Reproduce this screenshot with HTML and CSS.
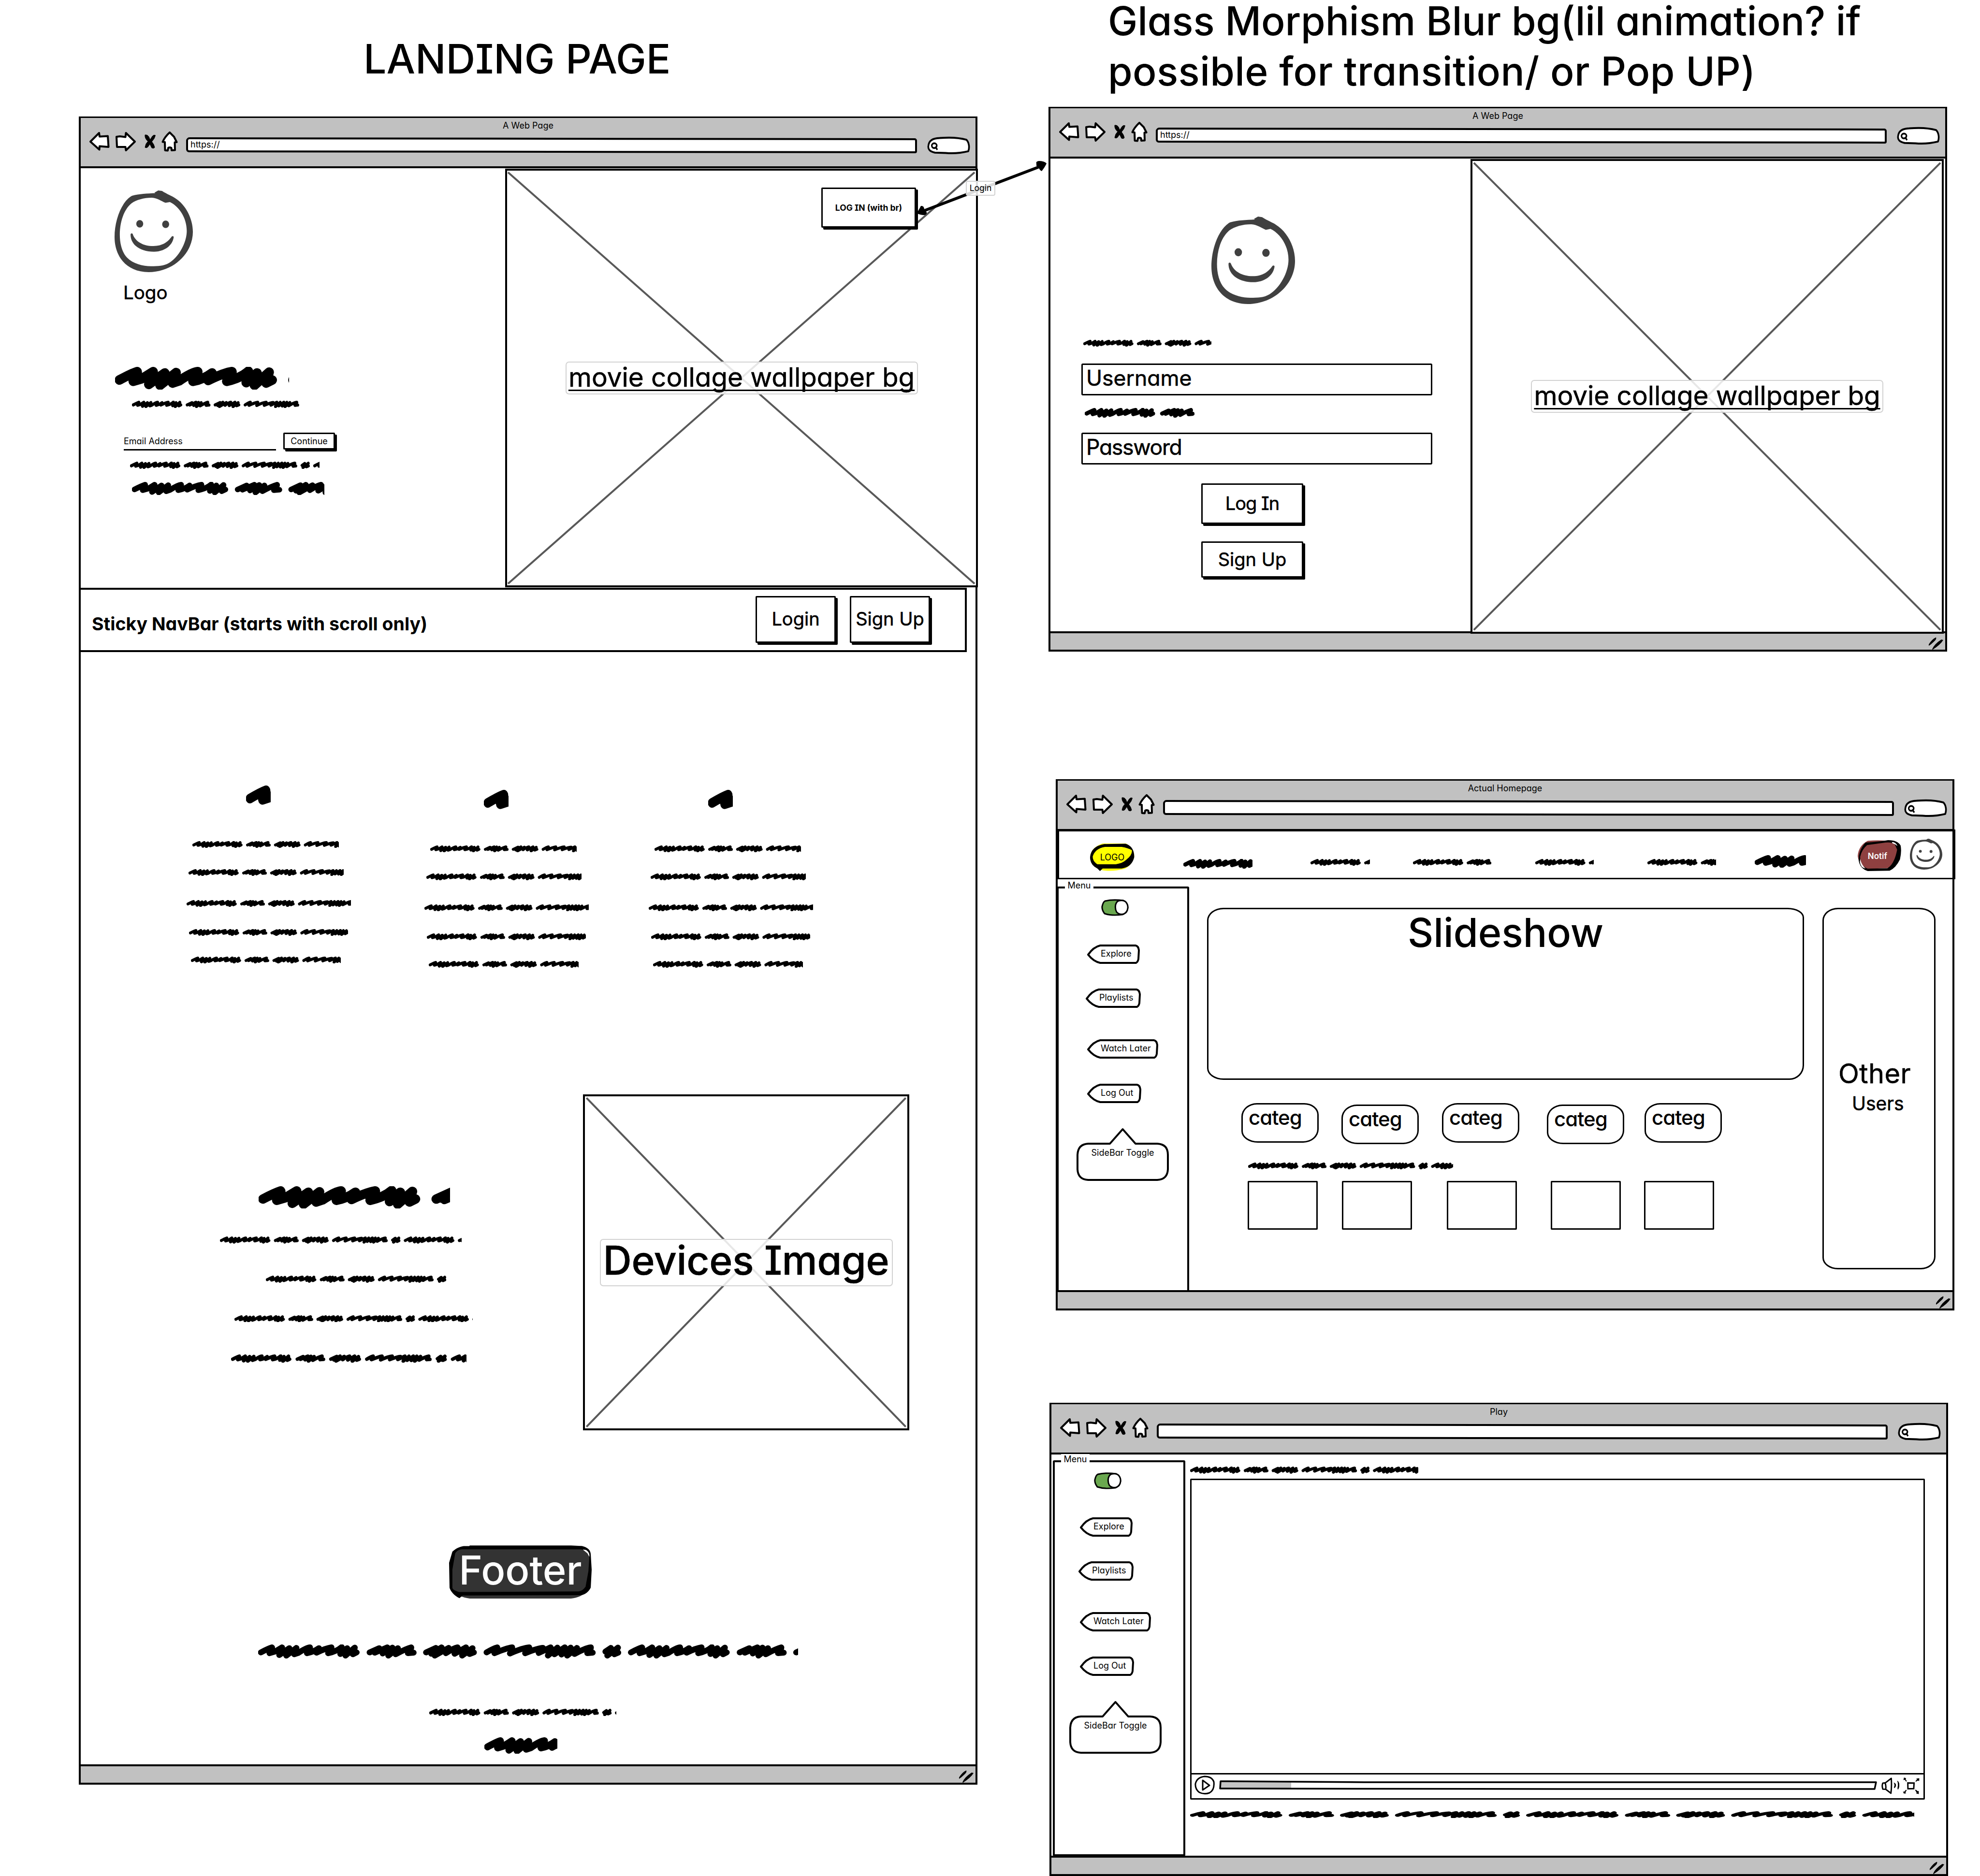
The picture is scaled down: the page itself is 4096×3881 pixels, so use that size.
FILE: index.html
```
<!DOCTYPE html>
<html lang="en">
<head>
<meta charset="utf-8">
<title>Streaming site wireframes</title>
<link rel="stylesheet" href="styles.css">
</head>
<body>
<svg class="defs" width="0" height="0" aria-hidden="true">
  <defs>
    <g id="phrase" fill="none" stroke="#000" stroke-width="22" stroke-linecap="round" stroke-linejoin="round">
      <path d="M10,30 Q36,16 51,11 Q53,18 42,33 L62,27 L88,11 L78,40 L115,14 L104,42 L141,13 L133,37 L148,32 Q178,12 191,11 Q192,18 180,33 Q205,28 224,14 L215,31 Q250,14 270,11 Q272,17 258,33 Q290,26 308,10 L303,36 L328,14 L322,42 L356,12 L349,37 L363,30"/>
      <path d="M411,30 L446,14 L430,31 L476,11 L459,34 L495,12 L480,42 L515,14 L507,37 Q545,16 564,11 Q566,17 552,33 L573,31"/>
      <path d="M619,30 L655,13 L638,35 L676,11 L651,42 L702,13 L692,33 Q720,14 735,11 L724,35 L766,11 L752,42 L790,14 L779,36 L795,30"/>
      <path d="M842,30 Q868,14 881,11 Q883,18 871,33 Q915,14 936,11 Q938,18 928,34 Q975,13 999,11 Q1000,18 984,33 Q1030,14 1050,13 L1034,32 L1078,11 L1068,42 L1103,12 L1092,37 L1130,11 L1118,38 L1152,12 L1139,42 L1175,13 L1166,36 Q1205,14 1226,11 Q1228,18 1213,33 L1233,31"/>
      <path d="M1280,27 L1300,13 L1287,42 L1326,12 L1313,37 L1327,31 L1292,27"/>
    </g>
    <g id="scribble">
      <use href="#phrase"/>
      <use href="#phrase" x="1364"/>
      <use href="#phrase" x="2728"/>
    </g>
    <symbol id="smiley" viewBox="0 0 269 304" preserveAspectRatio="none">
      <path fill="#404040" fill-rule="evenodd" d="M137,8 L150,0 L163,2 C180,14 200,22 207,28 C244,52 269,105 269,154 C269,232 205,303 117,304 C40,303 0,245 0,173 C0,110 25,40 60,20 C85,12 112,12 140,10 Z M18,165 C18,196 25,230 43,250 C62,272 98,282 125,282 C150,282 168,282 187,270 C220,248 248,195 248,150 C248,100 220,58 190,43 L175,46 C160,40 148,28 128,27 C100,27 75,35 58,48 C33,70 18,115 18,165 Z"/>
      <ellipse fill="#404040" cx="86.500" cy="124" rx="12" ry="14"/>
      <ellipse fill="#404040" cx="175.500" cy="126" rx="12" ry="14"/>
      <path fill="#404040" d="M55,164 C56,158 62,159 63,164 C72,190 98,207 133,207 C165,207 184,191 196,172 C199,168 204,170 203,175 C198,208 168,228 135,228 C92,228 55,205 55,164 Z"/>
    </symbol>
    <symbol id="nav-back" viewBox="0 0 42 42">
      <path fill="#fff" stroke="#000" stroke-width="4" stroke-linejoin="round" d="M2,21 L20,3 L21,10.500 L38,9.500 L39.500,32 L21,30.500 L20.500,37.500 Z"/>
    </symbol>
    <symbol id="nav-forward" viewBox="0 0 42 42">
      <path fill="#fff" stroke="#000" stroke-width="4" stroke-linejoin="round" d="M2,11 L9,10 L20.500,11.500 L21.500,3 L40,21 L21.500,39 L20.500,32 L3,32 Z"/>
    </symbol>
    <symbol id="nav-stop" viewBox="0 0 24 30">
      <path d="M2,1 Q7,0 10,5 L12.500,11 L17,4 Q20,0 23.500,2 Q22,9 16,15 Q21,21 22,27 Q20,30 16,28 L12,20 L8,26 Q5,29 2,27 Q3,19 8,14.500 Q1,8 2,1 Z" stroke="#000" stroke-width="1"/>
    </symbol>
    <symbol id="nav-home" viewBox="0 0 34 42">
      <path fill="#fff" stroke="#000" stroke-width="4" stroke-linejoin="round" d="M17,2 L26,11 L31.500,22 L27.500,22.500 L28,38.500 L21,39 L20.500,34 Q17,32 14,34 L13,39.500 L7.500,39 L7,22 L2.500,21.500 Q7,11 17,2 Z"/>
    </symbol>
    <symbol id="nav-search" viewBox="1320 72 139 53" preserveAspectRatio="none">
      <path fill="#fff" stroke="#000" stroke-width="5.500" stroke-linejoin="round" d="M1324,99 C1326,85 1336,78 1360,77 C1385,75 1420,75 1447,82 C1456,90 1457,105 1453,115 C1430,120 1405,122 1380,120 L1345,119 C1328,116 1322,109 1324,99 Z"/>
      <ellipse cx="1343" cy="99" rx="8" ry="7" fill="none" stroke="#000" stroke-width="5"/>
      <path d="M1346,102 L1353,111" stroke="#000" stroke-width="5"/>
    </symbol>
    <symbol id="grip" viewBox="0 0 32 26">
      <path d="M1,15 Q8,4 16,0.500 Q18,4 11,10 Q6,15 1,18 Z M8,25 Q13,14 27,5 L31,6 Q25,16 9,26 Z"/>
    </symbol>
    <symbol id="toggle" viewBox="0 0 57 35">
      <path fill="#6aa84f" stroke="#000" stroke-width="3" d="M8,4 Q24,0 46,3 Q54,9 55,18 Q53,29 44,32 Q22,35 7,30 Q1,22 2,15 Q4,6 8,4 Z"/>
      <path fill="#fff" stroke="#000" stroke-width="3" d="M36,3.500 Q46,1 51,6 Q56,12 55,19 Q54,28 46,31 Q38,33 32,27 Q28,20 30,11 Q32,5 36,3.500 Z"/>
    </symbol>
  </defs>
</svg>

<main class="board">
  <h1 class="note note-landing">LANDING PAGE</h1>
  <h2 class="note note-glass"><span>Glass Morphism Blur bg(lil animation? if</span><span>possible for transition/ or Pop UP)</span></h2>

  <section class="window window-landing">
    <header class="chrome">
      <div class="chrome-title">A Web Page</div>
      <div class="chrome-bar">
        <svg class="ic-arrow"><use href="#nav-back"/></svg>
        <svg class="ic-arrow"><use href="#nav-forward"/></svg>
        <svg class="ic-stop"><use href="#nav-stop"/></svg>
        <svg class="ic-home"><use href="#nav-home"/></svg>
        <div class="address">https://</div>
        <svg class="ic-search"><use href="#nav-search"/></svg>
      </div>
    </header>
    <div class="page">
      <div class="hero">
        <div class="hero-copy">
          <svg class="hero-logo"><use href="#smiley"/></svg>
          <div class="logo-name">Logo</div>
          <svg class="scribble hs1" width="360" height="47" viewBox="0 0 402 52" preserveAspectRatio="none"><use href="#scribble"/></svg>
          <svg class="scribble hs2" width="347" height="15" viewBox="0 0 1248 52" preserveAspectRatio="none"><use href="#scribble"/></svg>
          <div class="signup">
            <div class="email">Email Address</div>
            <div class="btn btn-small">Continue</div>
          </div>
          <svg class="scribble hs3" width="392" height="15" viewBox="0 0 1410 52" preserveAspectRatio="none"><use href="#scribble"/></svg>
          <svg class="scribble hs4" width="398" height="27" viewBox="0 0 748 52" preserveAspectRatio="none"><use href="#scribble"/></svg>
        </div>
        <div class="image image-hero">
          <svg class="cross" viewBox="0 0 100 100" preserveAspectRatio="none"><path d="M.2,.4 L99.700,99.600 M99.700,.4 L.2,99.600" vector-effect="non-scaling-stroke"/></svg>
          <div class="caption">movie collage wallpaper bg</div>
          <div class="btn btn-login-hero">LOG IN (with br)</div>
        </div>
      </div>

      <nav class="sticky">
        <div class="sticky-title">Sticky NavBar (starts with scroll only)</div>
        <div class="btn btn-nav">Login</div>
        <div class="btn btn-nav">Sign Up</div>
      </nav>

      <div class="features">
        <div class="feature">
          <svg class="scribble f0" width="51" height="47" viewBox="0 0 63 52" preserveAspectRatio="none"><use href="#scribble"/></svg>
          <svg class="scribble f1" width="303" height="14" viewBox="0 0 1092 52" preserveAspectRatio="none"><use href="#scribble"/></svg>
          <svg class="scribble f2" width="321" height="14" viewBox="0 0 1157 52" preserveAspectRatio="none"><use href="#scribble"/></svg>
          <svg class="scribble f3" width="340" height="14" viewBox="0 0 1226 52" preserveAspectRatio="none"><use href="#scribble"/></svg>
          <svg class="scribble f4" width="329" height="14" viewBox="0 0 1187 52" preserveAspectRatio="none"><use href="#scribble"/></svg>
          <svg class="scribble f5" width="310" height="14" viewBox="0 0 1118 52" preserveAspectRatio="none"><use href="#scribble"/></svg>
        </div>
        <div class="feature">
          <svg class="scribble f0" width="51" height="47" viewBox="0 0 63 52" preserveAspectRatio="none"><use href="#scribble"/></svg>
          <svg class="scribble f1" width="303" height="14" viewBox="0 0 1092 52" preserveAspectRatio="none"><use href="#scribble"/></svg>
          <svg class="scribble f2" width="321" height="14" viewBox="0 0 1157 52" preserveAspectRatio="none"><use href="#scribble"/></svg>
          <svg class="scribble f3" width="340" height="14" viewBox="0 0 1226 52" preserveAspectRatio="none"><use href="#scribble"/></svg>
          <svg class="scribble f4" width="329" height="14" viewBox="0 0 1187 52" preserveAspectRatio="none"><use href="#scribble"/></svg>
          <svg class="scribble f5" width="310" height="14" viewBox="0 0 1118 52" preserveAspectRatio="none"><use href="#scribble"/></svg>
        </div>
        <div class="feature">
          <svg class="scribble f0" width="51" height="47" viewBox="0 0 63 52" preserveAspectRatio="none"><use href="#scribble"/></svg>
          <svg class="scribble f1" width="303" height="14" viewBox="0 0 1092 52" preserveAspectRatio="none"><use href="#scribble"/></svg>
          <svg class="scribble f2" width="321" height="14" viewBox="0 0 1157 52" preserveAspectRatio="none"><use href="#scribble"/></svg>
          <svg class="scribble f3" width="340" height="14" viewBox="0 0 1226 52" preserveAspectRatio="none"><use href="#scribble"/></svg>
          <svg class="scribble f4" width="329" height="14" viewBox="0 0 1187 52" preserveAspectRatio="none"><use href="#scribble"/></svg>
          <svg class="scribble f5" width="310" height="14" viewBox="0 0 1118 52" preserveAspectRatio="none"><use href="#scribble"/></svg>
        </div>
      </div>

      <div class="devices">
        <div class="devices-copy">
          <svg class="scribble d0" width="396" height="46" viewBox="0 0 443 52" preserveAspectRatio="none"><use href="#scribble"/></svg>
          <svg class="scribble d1" width="500" height="14.500" viewBox="0 0 1792 52" preserveAspectRatio="none"><use href="#scribble"/></svg>
          <svg class="scribble d2" width="373" height="14.500" viewBox="0 0 1337 52" preserveAspectRatio="none"><use href="#scribble"/></svg>
          <svg class="scribble d3" width="493" height="14.500" viewBox="0 0 1767 52" preserveAspectRatio="none"><use href="#scribble"/></svg>
          <svg class="scribble d4" width="487" height="17" viewBox="0 0 1460 52" preserveAspectRatio="none"><use href="#scribble"/></svg>
        </div>
        <div class="image image-devices">
          <svg class="cross" viewBox="0 0 100 100" preserveAspectRatio="none"><path d="M.5,.5 L99.500,99.500 M99.500,.5 L.5,99.500" vector-effect="non-scaling-stroke"/></svg>
          <div class="caption caption-large">Devices Image</div>
        </div>
      </div>

      <div class="footer">
        <div class="badge badge-footer">
          <svg class="badge-shape" viewBox="431 98 303 311" preserveAspectRatio="none">
            <path fill="#333" d="M475,98 L690,98 L715,102 L730,240 L716,385 Q705,405 690,409 L475,409 Q455,402 448,380 L440,240 Z"/>
            <path d="M462,102 L712,102 C726,106 732,130 732,150 L734,240 L732,345 C728,370 720,386 712,389 L460,391 L453,407 C440,390 433,360 432,345 L431,200 L438,135 C445,115 455,104 462,102 Z"/>
            <path fill="#333" d="M458,121 L712,121 C722,130 729,150 729,170 L727,250 L721,340 C716,358 712,366 706,367 L452,371 C444,365 438,355 438,345 L438,240 L444,145 C447,130 452,122 458,121 Z"/>
            <path fill="#fff" d="M715,122 L722,125 C728,135 730,150 729,165 L725,145 Z"/>
          </svg>
          <span>Footer</span>
        </div>
        <svg class="scribble g1" width="1117" height="28.500" viewBox="0 0 1990 52" preserveAspectRatio="none"><use href="#scribble"/></svg>
        <svg class="scribble g2" width="386.500" height="15" viewBox="0 0 1371 52" preserveAspectRatio="none"><use href="#scribble"/></svg>
        <svg class="scribble g3" width="151" height="34.500" viewBox="0 0 232 52" preserveAspectRatio="none"><use href="#scribble"/></svg>
      </div>
    </div>
    <footer class="status"><svg class="ic-grip"><use href="#grip"/></svg></footer>
  </section>

  <section class="window window-login">
    <header class="chrome">
      <div class="chrome-title">A Web Page</div>
      <div class="chrome-bar">
        <svg class="ic-arrow"><use href="#nav-back"/></svg>
        <svg class="ic-arrow"><use href="#nav-forward"/></svg>
        <svg class="ic-stop"><use href="#nav-stop"/></svg>
        <svg class="ic-home"><use href="#nav-home"/></svg>
        <div class="address">https://</div>
        <svg class="ic-search"><use href="#nav-search"/></svg>
      </div>
    </header>
    <div class="page login">
      <div class="login-form">
        <svg class="login-logo"><use href="#smiley"/></svg>
        <svg class="scribble l1" width="265" height="14" viewBox="0 0 956 52" preserveAspectRatio="none"><use href="#scribble"/></svg>
        <div class="field field-user">Username</div>
        <svg class="scribble l2" width="227" height="20" viewBox="0 0 583 52" preserveAspectRatio="none"><use href="#scribble"/></svg>
        <div class="field field-pass">Password</div>
        <div class="btn btn-form btn-in">Log In</div>
        <div class="btn btn-form btn-up">Sign Up</div>
      </div>
      <div class="image image-login">
        <svg class="cross" viewBox="0 0 100 100" preserveAspectRatio="none"><path d="M.3,.4 L99.700,99.600 M99.700,.4 L.3,99.600" vector-effect="non-scaling-stroke"/></svg>
        <div class="caption">movie collage wallpaper bg</div>
      </div>
    </div>
    <footer class="status"><svg class="ic-grip"><use href="#grip"/></svg></footer>
  </section>

  <section class="window window-home">
    <header class="chrome">
      <div class="chrome-title">Actual Homepage</div>
      <div class="chrome-bar">
        <svg class="ic-arrow"><use href="#nav-back"/></svg>
        <svg class="ic-arrow"><use href="#nav-forward"/></svg>
        <svg class="ic-stop"><use href="#nav-stop"/></svg>
        <svg class="ic-home"><use href="#nav-home"/></svg>
        <div class="address"></div>
        <svg class="ic-search"><use href="#nav-search"/></svg>
      </div>
    </header>
    <div class="page">
      <nav class="topnav">
        <div class="badge badge-logo">
          <svg class="badge-shape" viewBox="147 252 152 97" preserveAspectRatio="none">
            <path fill="#ff0" d="M190,252 L270,252 Q298,268 298,298 Q290,330 265,341 Q220,353 185,345 L160,325 Q148,310 148,295 Q152,265 190,252 Z"/>
            <path d="M195,254 L268,253 Q298,262 298,300 Q290,335 255,340 L190,340 L181,349 L172,340 Q147,328 147,300 Q150,262 195,254 Z"/>
            <path fill="#ff0" d="M198,264 L255,264 Q278,268 290,276 Q292,292 270,310 Q258,322 235,325 L172,325 Q156,315 156,298 Q164,270 198,264 Z"/>
          </svg>
          <span>LOGO</span>
        </div>
        <svg class="scribble n1" width="143" height="20" viewBox="0 0 366 52" preserveAspectRatio="none"><use href="#scribble"/></svg>
        <svg class="scribble n2" width="123" height="14" viewBox="0 0 443 52" preserveAspectRatio="none"><use href="#scribble"/></svg>
        <svg class="scribble n3" width="162" height="14" viewBox="0 0 583 52" preserveAspectRatio="none"><use href="#scribble"/></svg>
        <svg class="scribble n4" width="121" height="14" viewBox="0 0 437 52" preserveAspectRatio="none"><use href="#scribble"/></svg>
        <svg class="scribble n5" width="142" height="14" viewBox="0 0 514 52" preserveAspectRatio="none"><use href="#scribble"/></svg>
        <svg class="scribble n6" width="106" height="26" viewBox="0 0 196 52" preserveAspectRatio="none"><use href="#scribble"/></svg>
        <div class="badge badge-notif">
          <svg class="badge-shape" viewBox="1173 193 139 88" preserveAspectRatio="none">
            <path fill="#8e4040" d="M1205,195 Q1250,191 1290,198 L1304,212 L1300,240 L1278,272 L1200,276 Q1176,262 1173,238 Q1176,208 1205,195 Z"/>
            <path fill-rule="evenodd" d="M1198,200 Q1240,198 1270,193 Q1300,193 1310,208 Q1314,225 1308,248 Q1295,272 1275,280 L1205,281 Q1180,274 1176,250 Q1176,222 1198,200 Z M1203,207 Q1186,220 1181,240 Q1180,268 1205,274 L1268,273 Q1290,262 1299,220 L1292,206 Q1282,198 1262,200 Z"/>
            <path fill="#fff" d="M1181,246 Q1184,262 1198,274 Q1182,272 1180,255 Z M1282,198 Q1296,199 1300,210 Q1292,204 1284,202 Z"/>
          </svg>
          <span>Notif</span>
        </div>
        <svg class="avatar"><use href="#smiley"/></svg>
      </nav>
      <div class="home">
        <aside class="menu menu-home">
          <div class="menu-legend">Menu</div>
          <svg class="ic-toggle"><use href="#toggle"/></svg>
          <div class="tag t1"><svg class="tag-shape" viewBox="0 0 109 40"><path d="M2,21 Q13,5 27,2 L100,2 Q106,3 107,12 L106,30 Q105,36 101,38 L27,38 Q13,35 2,21 Z"/></svg>Explore</div>
          <div class="tag t2"><svg class="tag-shape" viewBox="0 0 114 40"><path d="M2,21 Q13,5 27,2 L105,2 Q111,3 112,12 L111,30 Q110,36 106,38 L27,38 Q13,35 2,21 Z"/></svg>Playlists</div>
          <div class="tag t3"><svg class="tag-shape" viewBox="0 0 147 40"><path d="M2,21 Q13,5 27,2 L138,2 Q144,3 145,12 L144,30 Q143,36 139,38 L27,38 Q13,35 2,21 Z"/></svg>Watch Later</div>
          <div class="tag t4"><svg class="tag-shape" viewBox="0 0 112 40"><path d="M2,21 Q13,5 27,2 L103,2 Q109,3 110,12 L109,30 Q108,36 104,38 L27,38 Q13,35 2,21 Z"/></svg>Log Out</div>
          <div class="callout"><svg class="callout-shape" viewBox="0 0 191 110"><path d="M24,33 L69,33 L95.500,3 L122,33 L167,33 Q189,34 189,56 L189,86 Q188,107 167,108 L24,108 Q3,107 2,86 L2,56 Q3,34 24,33 Z"/></svg>SideBar Toggle</div>
        </aside>
        <div class="home-main">
          <div class="slideshow">Slideshow</div>
          <div class="categories">
            <div class="categ">categ</div>
            <div class="categ low">categ</div>
            <div class="categ">categ</div>
            <div class="categ low">categ</div>
            <div class="categ">categ</div>
          </div>
          <svg class="scribble m1" width="424" height="14" viewBox="0 0 1527 52" preserveAspectRatio="none"><use href="#scribble"/></svg>
          <div class="thumbs">
            <div class="thumb"></div>
            <div class="thumb"></div>
            <div class="thumb"></div>
            <div class="thumb"></div>
            <div class="thumb"></div>
          </div>
        </div>
        <aside class="others">
          <div class="others-title">Other</div>
          <div class="others-sub">Users</div>
        </aside>
      </div>
    </div>
    <footer class="status"><svg class="ic-grip"><use href="#grip"/></svg></footer>
  </section>

  <section class="window window-play">
    <header class="chrome">
      <div class="chrome-title">Play</div>
      <div class="chrome-bar">
        <svg class="ic-arrow"><use href="#nav-back"/></svg>
        <svg class="ic-arrow"><use href="#nav-forward"/></svg>
        <svg class="ic-stop"><use href="#nav-stop"/></svg>
        <svg class="ic-home"><use href="#nav-home"/></svg>
        <div class="address"></div>
        <svg class="ic-search"><use href="#nav-search"/></svg>
      </div>
    </header>
    <div class="page play">
      <aside class="menu menu-play">
        <div class="menu-legend">Menu</div>
        <svg class="ic-toggle"><use href="#toggle"/></svg>
        <div class="tag t1"><svg class="tag-shape" viewBox="0 0 109 40"><path d="M2,21 Q13,5 27,2 L100,2 Q106,3 107,12 L106,30 Q105,36 101,38 L27,38 Q13,35 2,21 Z"/></svg>Explore</div>
        <div class="tag t2"><svg class="tag-shape" viewBox="0 0 114 40"><path d="M2,21 Q13,5 27,2 L105,2 Q111,3 112,12 L111,30 Q110,36 106,38 L27,38 Q13,35 2,21 Z"/></svg>Playlists</div>
        <div class="tag t3"><svg class="tag-shape" viewBox="0 0 147 40"><path d="M2,21 Q13,5 27,2 L138,2 Q144,3 145,12 L144,30 Q143,36 139,38 L27,38 Q13,35 2,21 Z"/></svg>Watch Later</div>
        <div class="tag t4"><svg class="tag-shape" viewBox="0 0 112 40"><path d="M2,21 Q13,5 27,2 L103,2 Q109,3 110,12 L109,30 Q108,36 104,38 L27,38 Q13,35 2,21 Z"/></svg>Log Out</div>
        <div class="callout"><svg class="callout-shape" viewBox="0 0 191 110"><path d="M24,33 L69,33 L95.500,3 L122,33 L167,33 Q189,34 189,56 L189,86 Q188,107 167,108 L24,108 Q3,107 2,86 L2,56 Q3,34 24,33 Z"/></svg>SideBar Toggle</div>
      </aside>
      <div class="play-main">
        <svg class="scribble p1" width="472" height="14.500" viewBox="0 0 1701 52" preserveAspectRatio="none"><use href="#scribble"/></svg>
        <div class="player">
          <div class="screen"></div>
          <div class="controls">
            <svg class="ic-play" viewBox="0 0 42 40"><path fill="none" stroke="#000" stroke-width="3" stroke-linejoin="round" d="M21,2 Q36,2 40,13 Q42,30 31,36 Q20,40 10,35 Q1,28 2,17 Q5,4 21,2 Z M17,10 L31,20.500 L17,30 Z"/></svg>
            <svg class="ic-progress" viewBox="0 0 1361 21"><path fill="#fff" d="M3,2 L1359,5 L1356,19 L2,17 Z"/><path fill="#c4c4c4" d="M3,2 L149,3 L149,17 L2,17 Z"/><path fill="none" stroke="#000" stroke-width="3.500" stroke-linejoin="round" d="M3,2 L300,4 L1359,4 L1356,18 L700,18 L2,17 Z"/></svg>
            <svg class="ic-volume" viewBox="310 235 158 145"><path fill="none" stroke="#000" stroke-width="12" stroke-linejoin="round" d="M322,284 L345,281 L395,243 Q400,310 392,371 L347,337 L323,336 Q312,308 322,284 Z M342,282 Q352,308 347,337"/><path d="M415,279 Q436,283 436,303 Q433,322 420,327 Q416,322 423,303 Q422,286 415,279 Z M445,263 Q465,272 464,300 Q465,325 453,340 Q445,335 452,305 Q454,280 445,263 Z"/></svg>
            <svg class="ic-full" viewBox="490 233 145 146"><path fill="none" stroke="#000" stroke-width="12" d="M534,281 L588,282 L585,330 L535,331 Z"/><path d="M496,256 L501,234 L520,240 L515,249 L526,265 L519,269 L508,254 Z M633,240 L632,264 L621,260 L603,271 L600,265 L613,251 L607,243 Z M492,355 L502,357 L518,340 L525,344 L513,362 L520,371 L500,373 Z M596,341 L604,339 L619,352 L628,350 L629,377 L606,372 L610,364 Z"/></svg>
          </div>
        </div>
        <svg class="scribble p2" width="1498" height="14.500" viewBox="0 0 2938 52" preserveAspectRatio="none"><use href="#scribble"/></svg>
      </div>
    </div>
    <footer class="status"><svg class="ic-grip"><use href="#grip"/></svg></footer>
  </section>

  <div class="link">
    <svg class="link-line" viewBox="0 0 276 120">
      <path fill="none" stroke="#000" stroke-width="6" d="M9,107 L266,9"/>
      <path d="M252,6 Q250,1 257,0 Q268,0 273,5 Q270,12 263,21 Q258,19 257,13 L252,10 Z"/>
      <path d="M13,93 Q20,92 20,101 L25,106 Q26,111 20,112 Q12,112 4,108 Q8,103 13,93 Z"/>
    </svg>
    <div class="link-label">Login</div>
  </div>
</main>
</body>
</html>
```
FILE: styles.css
```
* { box-sizing: border-box; }
body {
  margin: 0;
  background: #fff;
  color: #000;
  font-family: Inter, "Noto Sans", sans-serif;
  font-size: 18px;
  line-height: 22px;
  font-feature-settings: "cv11", "cv08";
}
svg { display: block; flex: none; }
.defs { position: absolute; }
.board { position: relative; width: 4096px; height: 3881px; overflow: hidden; }

/* Notes on the canvas */
.note { position: absolute; margin: 0; font-weight: 500; font-size: 82px; line-height: 104px; white-space: nowrap; }
.note-landing { left: 752px; top: 70px; font-size: 84px; }
.note-glass { left: 2292px; top: 0; }
.note-glass span { display: block; line-height: 88px; letter-spacing: -.1px; }
.note-glass span + span { line-height: 120px; letter-spacing: .400px; }

/* Browser windows */
.window {
  position: absolute;
  width: 1859px;
  display: flex;
  flex-direction: column;
  border: 4px solid #000;
  border-top-width: 3px;
  background: #fff;
}
.window-landing { left: 163px; top: 241px; height: 3451px; }
.window-login { left: 2169px; top: 221px; height: 1127px; }
.window-home { left: 2184px; top: 1612px; height: 1099px; }
.window-play { left: 2171px; top: 2902px; height: 979px; }
.chrome { height: 104px; flex: none; background: #c1c1c1; border-bottom: 4px solid #000; }
.chrome-title { height: 28px; line-height: 32px; text-align: center; }
.chrome-bar { display: flex; align-items: flex-start; padding-left: 18px; }
.ic-arrow { width: 42px; height: 42px; margin-right: 12px; }
.ic-stop { width: 24px; height: 30px; margin: 6px 12px 0 5px; }
.ic-home { width: 34px; height: 42px; margin-right: 17px; }
.address {
  width: 1512px;
  height: 31px;
  margin-top: 13px;
  padding-left: 5px;
  border: 4px solid #000;
  border-radius: 7px 5px 4px 6px;
  background: #fff;
  line-height: 22px;
  transform: skewY(.07deg);
}
.ic-search { width: 89px; height: 38px; margin: 10px 0 0 21px; }
.page { flex: 1; min-height: 0; }
.status {
  position: relative;
  z-index: 0;
  flex: none;
  height: 38px;
  border-top: 4px solid #000;
  background: #c1c1c1;
  display: flex;
  justify-content: flex-end;
  padding: 8px 3px 0 0;
}
.ic-grip { width: 32px; height: 26px; }

/* Shared parts */
.btn {
  display: flex;
  align-items: center;
  justify-content: center;
  flex: none;
  border: 3px solid #000;
  border-radius: 2px;
  background: #fff;
  box-shadow: 4px 4px 0 #000;
  font-size: 38px;
  white-space: nowrap;
}
.logo-name, .btn-nav, .btn-form, .field, .caption, .others { -webkit-text-stroke: .600px #000; }
.image {
  position: relative;
  z-index: 1;
  flex: none;
  display: flex;
  align-items: center;
  justify-content: center;
  border: 4px solid #000;
  background: #fff;
}
.cross { position: absolute; inset: 0; width: 100%; height: 100%; }
.cross path { stroke: #595959; stroke-width: 4px; fill: none; }
.caption {
  position: relative;
  width: 729px;
  height: 68px;
  border: 2px solid #d2d2d2;
  border-radius: 7px;
  background: rgba(255, 255, 255, .86);
  font-size: 54.800px;
  line-height: 60px;
  text-align: center;
  white-space: nowrap;
  text-decoration: underline;
  text-decoration-thickness: 3px;
  text-underline-offset: 6px;
  text-decoration-skip-ink: none;
}
.caption-large { width: 606px; height: 98px; font-size: 82px; font-weight: 500; line-height: 86px; text-decoration: none; letter-spacing: -.200px; }
.badge { position: relative; flex: none; }
.badge-shape { position: absolute; inset: 0; width: 100%; height: 100%; }
.badge span { position: relative; display: block; text-align: center; }

/* Landing: hero */
.hero { display: flex; height: 868px; }
.hero-copy { width: 878px; flex: none; }
.hero-logo { width: 162px; height: 169px; margin: 46px 0 0 70px; }
.logo-name { margin: 22px 0 0 88px; font-size: 38.500px; line-height: 40px; }
.hs1 { margin: 134px 0 0 71px; }
.hs2 { margin: 23px 0 0 106px; }
.signup { display: flex; align-items: flex-start; gap: 15px; margin: 51px 0 0 89px; }
.email { width: 315px; height: 37px; border-bottom: 3px solid #000; line-height: 35px; }
.btn-small { width: 107px; height: 35px; font-size: 18px; }
.hs3 { margin: 23px 0 0 102px; }
.hs4 { margin: 27px 0 0 106px; }
.image-hero { width: 978px; height: 866px; margin-top: 1px; }
.btn-login-hero {
  position: absolute;
  left: 650px;
  top: 35px;
  width: 196px;
  height: 83px;
  font-size: 17.500px;
  font-weight: 700;
  padding-bottom: 0;
}

/* Landing: sticky bar */
.sticky {
  display: flex;
  align-items: center;
  gap: 29px;
  width: 1837px;
  height: 133px;
  margin-left: -4px;
  padding: 0 72px 3px 23px;
  border: 4px solid #000;
}
.sticky-title { margin-right: auto; padding-top: 20px; font-size: 37.500px; font-weight: 700; line-height: 40px; white-space: nowrap; }
.btn-nav { width: 166px; height: 97px; padding-bottom: 2px; }

/* Landing: features */
.features { display: flex; padding: 276px 0 0 219px; }
.feature { width: 340px; margin-right: 152px; }
.feature + .feature { margin-top: 9px; margin-right: 124px; }
.f0 { margin-left: 123px; }
.f1 { margin: 68px 0 0 12px; }
.f2 { margin: 44px 0 0 4px; }
.f3 { margin: 50px 0 0 0; }
.f4 { margin: 46px 0 0 5px; }
.f5 { margin: 43px 0 0 9px; }

/* Landing: devices */
.devices { display: flex; margin-top: 262px; }
.devices-copy { width: 1039px; padding-top: 190px; }
.d0 { margin-left: 368px; }
.d1 { margin: 58px 0 0 288px; }
.d2 { margin: 66.500px 0 0 383px; }
.d3 { margin: 67px 0 0 318px; }
.d4 { margin: 67px 0 0 311px; }
.image-devices { width: 675px; height: 695px; }

/* Landing: footer */
.badge-footer { width: 295px; height: 110px; margin: 238px 0 0 762px; color: #fff; font-size: 83px; font-weight: 500; line-height: 102px; }
.g1 { margin: 95px 0 0 367px; }
.g2 { margin: 104px 0 0 721px; }
.g3 { margin: 44px 0 0 835px; }

/* Login popup */
.login { display: flex; }
.login-form { width: 869px; flex: none; }
.login-logo { width: 173px; height: 181px; margin: 120px 0 0 333px; }
.l1 { margin: 74px 0 0 68px; }
.field {
  width: 726px;
  height: 66px;
  margin-left: 64px;
  padding-left: 7px;
  border: 3.500px solid #000;
  border-radius: 3px;
  font-size: 44.500px;
  line-height: 54px;
}
.field-user { margin-top: 35px; }
.l2 { margin: 26px 0 0 71px; }
.field-pass { margin-top: 31px; letter-spacing: -1.300px; }
.btn-form { width: 211px; margin-left: 312px; padding-bottom: 2px; }
.btn-in { height: 84px; margin-top: 39px; letter-spacing: -1px; }
.btn-up { height: 75px; margin-top: 36px; }
.image-login { width: 979px; height: 982px; margin-top: 1px; }

/* Homepage */
.topnav {
  display: flex;
  width: 1858px;
  height: 103px;
  margin: -3px 0 0 -1px;
  padding-left: 64px;
  border: 4px solid #000;
  border-bottom-width: 3px;
}
.badge-logo { width: 92px; height: 57px; margin-top: 25px; line-height: 58px; }
.n1 { margin: 57px 0 0 101px; }
.n2 { margin: 57px 0 0 120px; }
.n3 { margin: 57px 0 0 89px; }
.n4 { margin: 57px 0 0 91px; }
.n5 { margin: 57px 0 0 111px; }
.n6 { margin: 49px 0 0 80px; }
.badge-notif { width: 90px; height: 64px; margin: 18px 0 0 107px; color: #fff; font-size: 17px; font-weight: 600; line-height: 66px; }
.badge-notif span { left: -4px; }
.avatar { width: 67px; height: 64px; margin: 15px 0 0 18px; }
.home { display: flex; }
.menu { flex: none; width: 274px; border: 4px solid #000; border-radius: 3px; }
.menu-home { height: 839px; margin: 15px 0 0 -2px; }
.menu-legend { width: 59px; height: 24px; margin: -17px 0 0 13px; background: #fff; text-align: center; line-height: 22px; }
.ic-toggle { width: 57px; height: 35px; margin: 15px 0 0 88px; }
.tag { position: relative; height: 40px; margin-left: 59px; padding-left: 28px; line-height: 37px; }
.tag-shape { position: absolute; left: 0; top: 0; height: 40px; }
.tag-shape path, .callout-shape path { fill: none; stroke: #000; stroke-width: 4px; stroke-linejoin: round; }
.t1 { margin-top: 59px; }
.t2 { margin: 51px 0 0 56px; }
.t3 { margin-top: 65px; }
.t4 { margin-top: 52px; }
.callout { position: relative; width: 191px; height: 110px; margin: 51px 0 0 37px; padding-top: 41px; text-align: center; }
.callout-shape { position: absolute; inset: 0; }
.home-main { width: 1235px; margin: 59px 0 0 37px; }
.slideshow {
  height: 356px;
  border: 3px solid #000;
  border-radius: 34px 34px 30px 34px / 26px 20px 30px 24px;
  font-size: 82.500px;
  font-weight: 500;
  line-height: 97px;
  text-align: center;
}
.categories { display: flex; margin: 48px 0 0 71px; }
.categ {
  width: 160px;
  height: 82px;
  margin-right: 47px;
  padding-left: 12px;
  border: 3px solid #000;
  border-radius: 32px 30px 32px 34px / 28px 24px 28px 24px;
  font-size: 42px;
  font-weight: 500;
  line-height: 53px;
  letter-spacing: -1px;
}
.categ:nth-child(2) { margin-right: 48px; }
.categ:nth-child(3) { margin-right: 57px; }
.categ:nth-child(4) { margin-right: 42px; }
.categ.low { position: relative; top: 3px; }
.m1 { margin: 41px 0 0 85px; }
.thumbs { display: flex; margin: 24px 0 0 84px; }
.thumb { width: 145px; height: 101px; margin-right: 50px; border: 3.500px solid #000; border-radius: 2px; }
.thumb:nth-child(2) { margin-right: 72px; }
.thumb:nth-child(3) { margin-right: 70px; }
.thumb:nth-child(4) { margin-right: 48px; }
.others {
  width: 234px;
  height: 748px;
  margin: 59px 0 0 38px;
  padding: 309px 0 0 30px;
  border: 3px solid #000;
  border-radius: 32px 34px 30px 32px / 26px 24px 26px 24px;
}
.others-title { font-size: 56px; line-height: 62px; letter-spacing: .400px; }
.others-sub { margin: 11px 0 0 28px; font-size: 39px; line-height: 40px; }

/* Player */
.play { display: flex; }
.menu-play { height: 819px; margin: 12px 0 0 3px; }
.menu-play .ic-toggle { margin: 14px 0 0 81px; }
.menu-play .tag { margin-left: 52px; }
.menu-play .t1 { margin-top: 58px; }
.menu-play .t2 { margin-left: 49px; }
.menu-play .callout { margin-left: 30px; }
.play-main { margin-left: 10px; }
.p1 { margin-top: 25px; }
.player { width: 1520px; height: 664px; margin-top: 10px; display: flex; flex-direction: column; border: 3.500px solid #000; border-radius: 2px; }
.screen { flex: 1; }
.controls { display: flex; height: 52px; border-top: 3.500px solid #000; }
.ic-play { width: 42px; height: 40px; margin: 2px 0 0 6px; }
.ic-progress { width: 1361px; height: 21px; margin: 12px 0 0 9px; }
.ic-volume { width: 38px; height: 35px; margin: 6px 0 0 9px; }
.ic-full { width: 35px; height: 35px; margin: 6px 0 0 6px; }
.p2 { margin-top: 24px; }

/* Link between the two login screens */
.link { position: absolute; z-index: 2; left: 1892px; top: 333px; width: 276px; height: 120px; }
.link-line { width: 276px; height: 120px; }
.link-label {
  position: absolute;
  left: 106px;
  top: 41px;
  width: 61px;
  height: 31px;
  border: 2px solid #d2d2d2;
  border-radius: 4px;
  background: rgba(255, 255, 255, .86);
  text-align: center;
  line-height: 25px;
  font-size: 17.500px;
}
```
